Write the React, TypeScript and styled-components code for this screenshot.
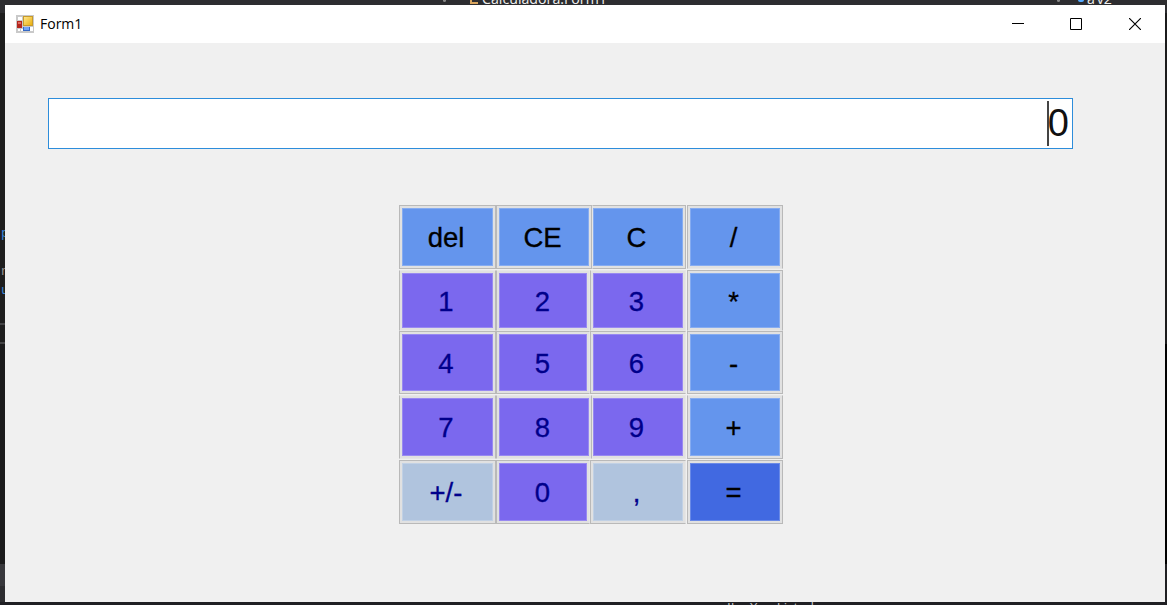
import React from 'react';
import styled, { createGlobalStyle } from 'styled-components';

const GlobalStyle = createGlobalStyle`
  * { box-sizing: border-box; }
  body { margin: 0; background: #1e1e1e; overflow: hidden; }
`;

const Desktop = styled.div`
  width: 1167px;
  height: 605px;
  display: grid;
  grid-template: 5px 597px 3px / 5px 1160px 2px;
  overflow: hidden;
  background: #1b1b1c;
`;

const EditorTabs = styled.div`
  grid-column: 1 / -1;
  display: flex;
  align-items: flex-end;
  overflow: hidden;
  background: #2d2d30;
  color: #f1f1f1;
  font: 14.2px/15px 'Open Sans', sans-serif;
`;

const TabLabel = styled.span<{ $gap: number }>`
  margin-left: ${p => p.$gap}px;
  height: 14px;
  white-space: pre;
`;

const TabIcon = styled.span<{ $gap: number; $color: string }>`
  margin-left: ${p => p.$gap}px;
  width: 8px;
  height: 4px;
  margin-bottom: 1px;
  border: solid ${p => p.$color};
  border-width: 0 0 2px 2px;
`;

const TabDot = styled.span<{ $gap: number; $color: string; $width: number }>`
  margin-left: ${p => p.$gap}px;
  width: ${p => p.$width}px;
  height: 2px;
  margin-bottom: 3px;
  border-radius: 0 0 2px 2px;
  background: ${p => p.$color};
`;

const EditorGutter = styled.div`
  overflow: hidden;
  padding-top: 219px;
  background: linear-gradient(#2d2d30 0 8px, #1e1e1e 8px 318px, #444446 318px 320px, #1e1e1e 320px 337px, #444446 337px 339px, #1b1b1c 339px 559px, #38383c 559px 581px, #2d2d30 581px);
  font: 13px/19px 'Liberation Mono', monospace;
`;

const CodeLine = styled.div<{ $color: string; $gap?: number }>`
  height: 19px;
  margin-top: ${p => p.$gap ?? 0}px;
  padding-left: 1px;
  color: ${p => p.$color};
`;

const EditorEdge = styled.div`
  background: linear-gradient(#2d2d30 0 8px, #1b1b1c 8px 339px, #000 339px 559px, #202023 559px);
`;

const StatusStrip = styled.div`
  grid-column: 1 / -1;
  display: flex;
  gap: 12px;
  overflow: hidden;
  padding-left: 727px;
  background: #1f1f23;
  color: #c8c8c8;
  font: 13.5px/11px 'Open Sans', sans-serif;
  white-space: pre;
`;

const Window = styled.main`
  display: flex;
  flex-direction: column;
  background: #f0f0f0;
`;

const TitleBar = styled.header`
  height: 38px;
  flex: none;
  display: flex;
  align-items: center;
  padding: 0 1px 0 11px;
  background: #fff;
`;

const Title = styled.h1`
  flex: 1;
  margin: 0 0 0 6px;
  color: #000;
  font: 400 14px/20px 'Open Sans', sans-serif;
`;

const WindowButton = styled.button`
  width: 58.5px;
  height: 38px;
  padding: 0;
  border: 0;
  background: none;
  display: grid;
  place-items: center;
`;

const Display = styled.div`
  flex: none;
  width: 1025px;
  height: 51px;
  margin: 55px 0 0 42.5px;
  padding: 0 2.5px 0 0;
  display: flex;
  justify-content: flex-end;
  border: 1px solid #2d8ddb;
  background: #fff;
  color: #111;
  font: 38px/49px 'Liberation Sans', sans-serif;
`;

const Caret = styled.span`
  width: 1.5px;
  height: 45px;
  margin: 2px -1px 0 0;
  background: #444;
`;

const Keypad = styled.section`
  width: 386px;
  margin: 56px 0 0 394px;
  display: flex;
  flex-direction: column;
`;

const KeyRow = styled.div<{ $height: number }>`
  display: flex;
  height: ${p => p.$height}px;
  padding-bottom: ${p => (p.$height > 61 ? 1 : 0)}px;
`;

const tones = {
  blue: { face: '#6495ed', ink: '#000' },
  violet: { face: '#7b68ee', ink: '#00008b' },
  steel: { face: '#b0c4de', ink: '#00008b' },
  royal: { face: '#4169e1', ink: '#000' },
};
type Tone = keyof typeof tones;

const edge = (sides: string, side: string) => (sides.includes(side) ? '#b9b9b9' : '#e6e6e6');

const Key = styled.button<{ $tone: Tone; $width: number; $sides: string; $gap: number; $thin: boolean }>`
  flex: none;
  width: ${p => p.$width}px;
  height: 100%;
  margin: 0 ${p => p.$gap}px 0 0;
  padding: ${p => (p.$thin ? '2px 2px 2px 0' : '2px')};
  border: 1px solid;
  border-color: ${p => `${edge(p.$sides, 't')} ${edge(p.$sides, 'r')} ${edge(p.$sides, 'b')} ${edge(p.$sides, 'l')}`};
  background: #e1e1e1;
  color: ${p => tones[p.$tone].ink};
  font: 27.5px/58px 'Liberation Sans', sans-serif;
  -webkit-text-stroke: 0.3px;
`;

const KeyFace = styled.span<{ $tone: Tone; $inset: number }>`
  display: flex;
  align-items: center;
  justify-content: center;
  width: 100%;
  height: 100%;
  padding: 2px ${p => p.$inset}px 0 0;
  background: ${p => tones[p.$tone].face};
  box-shadow: inset 0 0 0 1px rgba(255, 255, 255, 0.22);
`;

type KeySpec = [label: string, tone: Tone, width: number, gap: number, sides: string, thin?: boolean];

const rows: { height: number; keys: KeySpec[] }[] = [
  { height: 65, keys: [
    ['del', 'blue', 97, 0, 'trbl'], ['CE', 'blue', 96, 0, 'trbl'],
    ['C', 'blue', 94, 1, 'trb', true], ['/', 'blue', 96, 0, 'trl'],
  ] },
  { height: 61, keys: [
    ['1', 'violet', 97, 0, 'rl'], ['2', 'violet', 94, 0, 'l'],
    ['3', 'violet', 96, 1, 'l'], ['*', 'blue', 96, 0, 'trl'],
  ] },
  { height: 64, keys: [
    ['4', 'violet', 97, 0, 'trbl'], ['5', 'violet', 94, 0, 'tbl'],
    ['6', 'violet', 96, 1, 'tbl'], ['-', 'blue', 96, 0, 'trbl'],
  ] },
  { height: 65, keys: [
    ['7', 'violet', 97, 0, 'rl'], ['8', 'violet', 96, 0, 'rl'],
    ['9', 'violet', 94, 1, '', true], ['+', 'blue', 96, 0, 'rbl'],
  ] },
  { height: 65, keys: [
    ['+/-', 'steel', 97, 0, 'trbl'], ['0', 'violet', 94, 0, 'tbl'],
    [',', 'steel', 96, 1, 'tbl'], ['=', 'royal', 96, 0, 'trbl'],
  ] },
];

const FormIcon = () => (
  <svg width="18" height="18" viewBox="0 0 18 18" shapeRendering="crispEdges">
    <defs>
      <linearGradient id="gold" x1="0" y1="0" x2="1" y2="1">
        <stop offset="0" stopColor="#ffe68a" />
        <stop offset="1" stopColor="#eab010" />
      </linearGradient>
    </defs>
    <path fill="#c9c9c9" d="M0 0h18v18H0z" />
    <path fill="#fff" d="M2 2h4v3H2zM2 14h2v2H2zM5 14h2v2H5zM14 12h3v4h-3z" />
    <path fill="#b3261e" d="M1 6h5v7H1z" />
    <path fill="#df6a60" d="M2 7h3v2H2z" />
    <path fill="#c79a2b" d="M7 1h10v10H7z" />
    <path fill="url(#gold)" d="M8 2h8v8H8z" />
    <path fill="#3568c4" d="M7 12h7v4H7z" />
    <path fill="#73a4f5" d="M8 12h5v3H8z" />
  </svg>
);

export default function App() {
  return (
    <>
      <GlobalStyle />
      <Desktop>
        <EditorTabs>
          <TabDot $gap={443} $color="#888" $width={3} />
          <TabIcon $gap={24} $color="#d7a45e" />
          <TabLabel $gap={4}>Calculadora.Form1</TabLabel>
          <TabDot $gap={450} $color="#888" $width={3} />
          <TabDot $gap={18} $color="#55aaff" $width={6} />
          <TabLabel $gap={3}>a</TabLabel>
          <TabLabel $gap={2}>v2</TabLabel>
        </EditorTabs>
        <EditorGutter>
          <CodeLine $color="#3b86d8">p</CodeLine>
          <CodeLine $color="#999" $gap={19}>n</CodeLine>
          <CodeLine $color="#3b86d8">u</CodeLine>
        </EditorGutter>
        <Window>
          <TitleBar>
            <FormIcon />
            <Title>Form1</Title>
            <WindowButton aria-label="Minimize">
              <svg width="12" height="12"><path d="M0 5.5h12" stroke="#000" /></svg>
            </WindowButton>
            <WindowButton aria-label="Maximize">
              <svg width="12" height="12"><path d="M.5.5h11v11H.5z" fill="none" stroke="#000" /></svg>
            </WindowButton>
            <WindowButton aria-label="Close">
              <svg width="12" height="12"><path d="M0 0l12 12M12 0L0 12" stroke="#000" strokeWidth="1.15" /></svg>
            </WindowButton>
          </TitleBar>
          <Display><Caret />0</Display>
          <Keypad>
            {rows.map((row, i) => (
              <KeyRow key={i} $height={row.height}>
                {row.keys.map(([label, tone, width, gap, sides, thin], column) => (
                  <Key key={label} $tone={tone} $width={width} $gap={gap} $sides={sides} $thin={!!thin}>
                    <KeyFace $tone={tone} $inset={column === 1 && width === 94 ? 1 : 3}>{label}</KeyFace>
                  </Key>
                ))}
              </KeyRow>
            ))}
          </Keypad>
        </Window>
        <EditorEdge />
        <StatusStrip><span>IL</span><span>X</span><span>  Listado</span></StatusStrip>
      </Desktop>
    </>
  );
}
